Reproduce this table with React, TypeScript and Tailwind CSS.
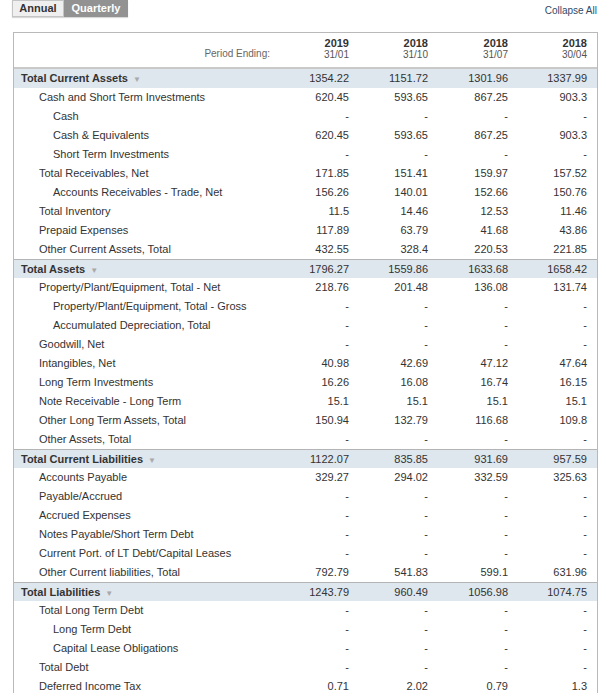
import React from 'react';

type Row = {
  label: string;
  level: 0 | 1 | 2;
  values: string[];
};

const rows: Row[] = [
  { label: 'Total Current Assets', level: 0, values: ['1354.22', '1151.72', '1301.96', '1337.99'] },
  { label: 'Cash and Short Term Investments', level: 1, values: ['620.45', '593.65', '867.25', '903.3'] },
  { label: 'Cash', level: 2, values: ['-', '-', '-', '-'] },
  { label: 'Cash & Equivalents', level: 2, values: ['620.45', '593.65', '867.25', '903.3'] },
  { label: 'Short Term Investments', level: 2, values: ['-', '-', '-', '-'] },
  { label: 'Total Receivables, Net', level: 1, values: ['171.85', '151.41', '159.97', '157.52'] },
  { label: 'Accounts Receivables - Trade, Net', level: 2, values: ['156.26', '140.01', '152.66', '150.76'] },
  { label: 'Total Inventory', level: 1, values: ['11.5', '14.46', '12.53', '11.46'] },
  { label: 'Prepaid Expenses', level: 1, values: ['117.89', '63.79', '41.68', '43.86'] },
  { label: 'Other Current Assets, Total', level: 1, values: ['432.55', '328.4', '220.53', '221.85'] },
  { label: 'Total Assets', level: 0, values: ['1796.27', '1559.86', '1633.68', '1658.42'] },
  { label: 'Property/Plant/Equipment, Total - Net', level: 1, values: ['218.76', '201.48', '136.08', '131.74'] },
  { label: 'Property/Plant/Equipment, Total - Gross', level: 2, values: ['-', '-', '-', '-'] },
  { label: 'Accumulated Depreciation, Total', level: 2, values: ['-', '-', '-', '-'] },
  { label: 'Goodwill, Net', level: 1, values: ['-', '-', '-', '-'] },
  { label: 'Intangibles, Net', level: 1, values: ['40.98', '42.69', '47.12', '47.64'] },
  { label: 'Long Term Investments', level: 1, values: ['16.26', '16.08', '16.74', '16.15'] },
  { label: 'Note Receivable - Long Term', level: 1, values: ['15.1', '15.1', '15.1', '15.1'] },
  { label: 'Other Long Term Assets, Total', level: 1, values: ['150.94', '132.79', '116.68', '109.8'] },
  { label: 'Other Assets, Total', level: 1, values: ['-', '-', '-', '-'] },
  { label: 'Total Current Liabilities', level: 0, values: ['1122.07', '835.85', '931.69', '957.59'] },
  { label: 'Accounts Payable', level: 1, values: ['329.27', '294.02', '332.59', '325.63'] },
  { label: 'Payable/Accrued', level: 1, values: ['-', '-', '-', '-'] },
  { label: 'Accrued Expenses', level: 1, values: ['-', '-', '-', '-'] },
  { label: 'Notes Payable/Short Term Debt', level: 1, values: ['-', '-', '-', '-'] },
  { label: 'Current Port. of LT Debt/Capital Leases', level: 1, values: ['-', '-', '-', '-'] },
  { label: 'Other Current liabilities, Total', level: 1, values: ['792.79', '541.83', '599.1', '631.96'] },
  { label: 'Total Liabilities', level: 0, values: ['1243.79', '960.49', '1056.98', '1074.75'] },
  { label: 'Total Long Term Debt', level: 1, values: ['-', '-', '-', '-'] },
  { label: 'Long Term Debt', level: 2, values: ['-', '-', '-', '-'] },
  { label: 'Capital Lease Obligations', level: 2, values: ['-', '-', '-', '-'] },
  { label: 'Total Debt', level: 1, values: ['-', '-', '-', '-'] },
  { label: 'Deferred Income Tax', level: 1, values: ['0.71', '2.02', '0.79', '1.3'] },
];

const periods = [
  { year: '2019', date: '31/01' },
  { year: '2018', date: '31/10' },
  { year: '2018', date: '31/07' },
  { year: '2018', date: '30/04' },
];

const cols = 'grid grid-cols-[266px_79px_79px_80px_79px]';

const App = () => (
  <div className="w-[606px] h-[693px] overflow-hidden bg-white font-['Liberation_Sans',Arial,sans-serif] text-[11px] text-[#333]">
    <div className="flex items-start justify-between pl-[12px] pr-[9px]">
      <div className="flex h-[17px] shadow-[0_1px_1px_rgba(0,0,0,0.15)]">
        <div className="w-[52px] border border-[#c4c4c4] bg-[#efefef] flex items-center justify-center font-bold text-[#333] leading-none">
          Annual
        </div>
        <div className="w-[64px] bg-[#929292] flex items-center justify-center font-bold text-white leading-none">
          Quarterly
        </div>
      </div>
      <div className="pt-[6px] text-[10px] text-[#2f4a68] leading-none">Collapse All</div>
    </div>

    <div className="ml-[13px] mt-[15px] w-[585px] border-x border-t border-[#b9b9b9]">
      <div className={`${cols} h-[36px] border-b-2 border-[#c9c9c9]`}>
        <div className="flex items-end justify-end pr-[10px] pb-[8px] text-[10px] text-[#666] leading-none">
          Period Ending:
        </div>
        {periods.map((p, i) => (
          <div key={i} className="flex flex-col items-end justify-end pr-[10px] pb-[7px] leading-none">
            <span className="font-bold text-[#333]">{p.year}</span>
            <span className="mt-[1px] text-[10px] text-[#555]">{p.date}</span>
          </div>
        ))}
      </div>

      {rows.map((r, i) => {
        const section = r.level === 0;
        return (
          <div
            key={i}
            className={`${cols} h-[19px] items-center leading-none ${
              section ? 'bg-[#dee6ee] border-t border-[#b4b4b4]' : ''
            } ${section && i === 0 ? 'border-t-0' : ''}`}
          >
            <div
              className={`whitespace-nowrap ${
                r.level === 0 ? 'pl-[7px] font-bold' : r.level === 1 ? 'pl-[25px]' : 'pl-[39px]'
              }`}
            >
              {r.label}
              {section && <span className="ml-[5px] text-[8px] text-[#a9a9a9]">▼</span>}
            </div>
            {r.values.map((v, j) => (
              <div key={j} className="text-right pr-[10px]">
                {v}
              </div>
            ))}
          </div>
        );
      })}
    </div>
  </div>
);

export default App;
